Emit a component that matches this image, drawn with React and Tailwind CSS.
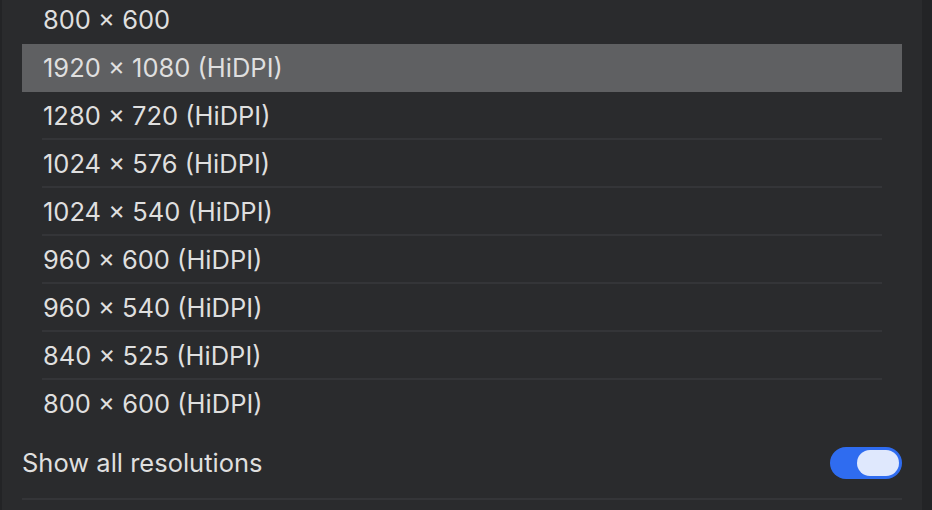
import { useState } from 'react';

const resolutions = [
  '800 × 600',
  '1920 × 1080 (HiDPI)',
  '1280 × 720 (HiDPI)',
  '1024 × 576 (HiDPI)',
  '1024 × 540 (HiDPI)',
  '960 × 600 (HiDPI)',
  '960 × 540 (HiDPI)',
  '840 × 525 (HiDPI)',
  '800 × 600 (HiDPI)',
];

export default function App() {
  const [selected, setSelected] = useState(1);
  const [showAll, setShowAll] = useState(true);

  return (
    <div
      className="flex h-[510px] w-[932px] overflow-hidden bg-[#232426] text-[#dfdfdf]"
      style={{ fontFamily: 'Inter, "Open Sans", sans-serif' }}
    >
      <div className="ml-[2px] flex w-[920px] flex-col bg-[#2a2b2d] px-5">
        {/* Resolution list */}
        <div className="-mt-1 flex flex-col">
          {resolutions.map((res, i) => {
            const isSelected = i === selected;
            const showLine = !isSelected && i + 1 !== selected && i < resolutions.length - 1;
            return (
              <div
                key={i}
                onClick={() => setSelected(i)}
                className={`flex h-12 flex-col ${isSelected ? 'bg-[#5f6062]' : ''}`}
              >
                <div className="flex flex-1 items-center pl-[21px] pt-[2px] text-[25.5px]">
                  {res}
                </div>
                <div className={`mx-5 h-[2px] ${showLine ? 'bg-[#343538]' : ''}`} />
              </div>
            );
          })}
        </div>

        {/* Show all toggle */}
        <div className="flex h-[70px] items-center justify-between">
          <span className="text-[25.5px]">Show all resolutions</span>
          <button
            onClick={() => setShowAll(!showAll)}
            className={`flex h-8 w-[72px] items-center rounded-full px-[3px] ${
              showAll ? 'justify-end bg-[#2f6cf0]' : 'justify-start bg-[#4a4b4e]'
            }`}
          >
            <span className="h-[26px] w-[42px] rounded-full bg-[#dfe8fd]" />
          </button>
        </div>
        <div className="h-[2px] bg-[#343538]" />
      </div>
    </div>
  );
}
